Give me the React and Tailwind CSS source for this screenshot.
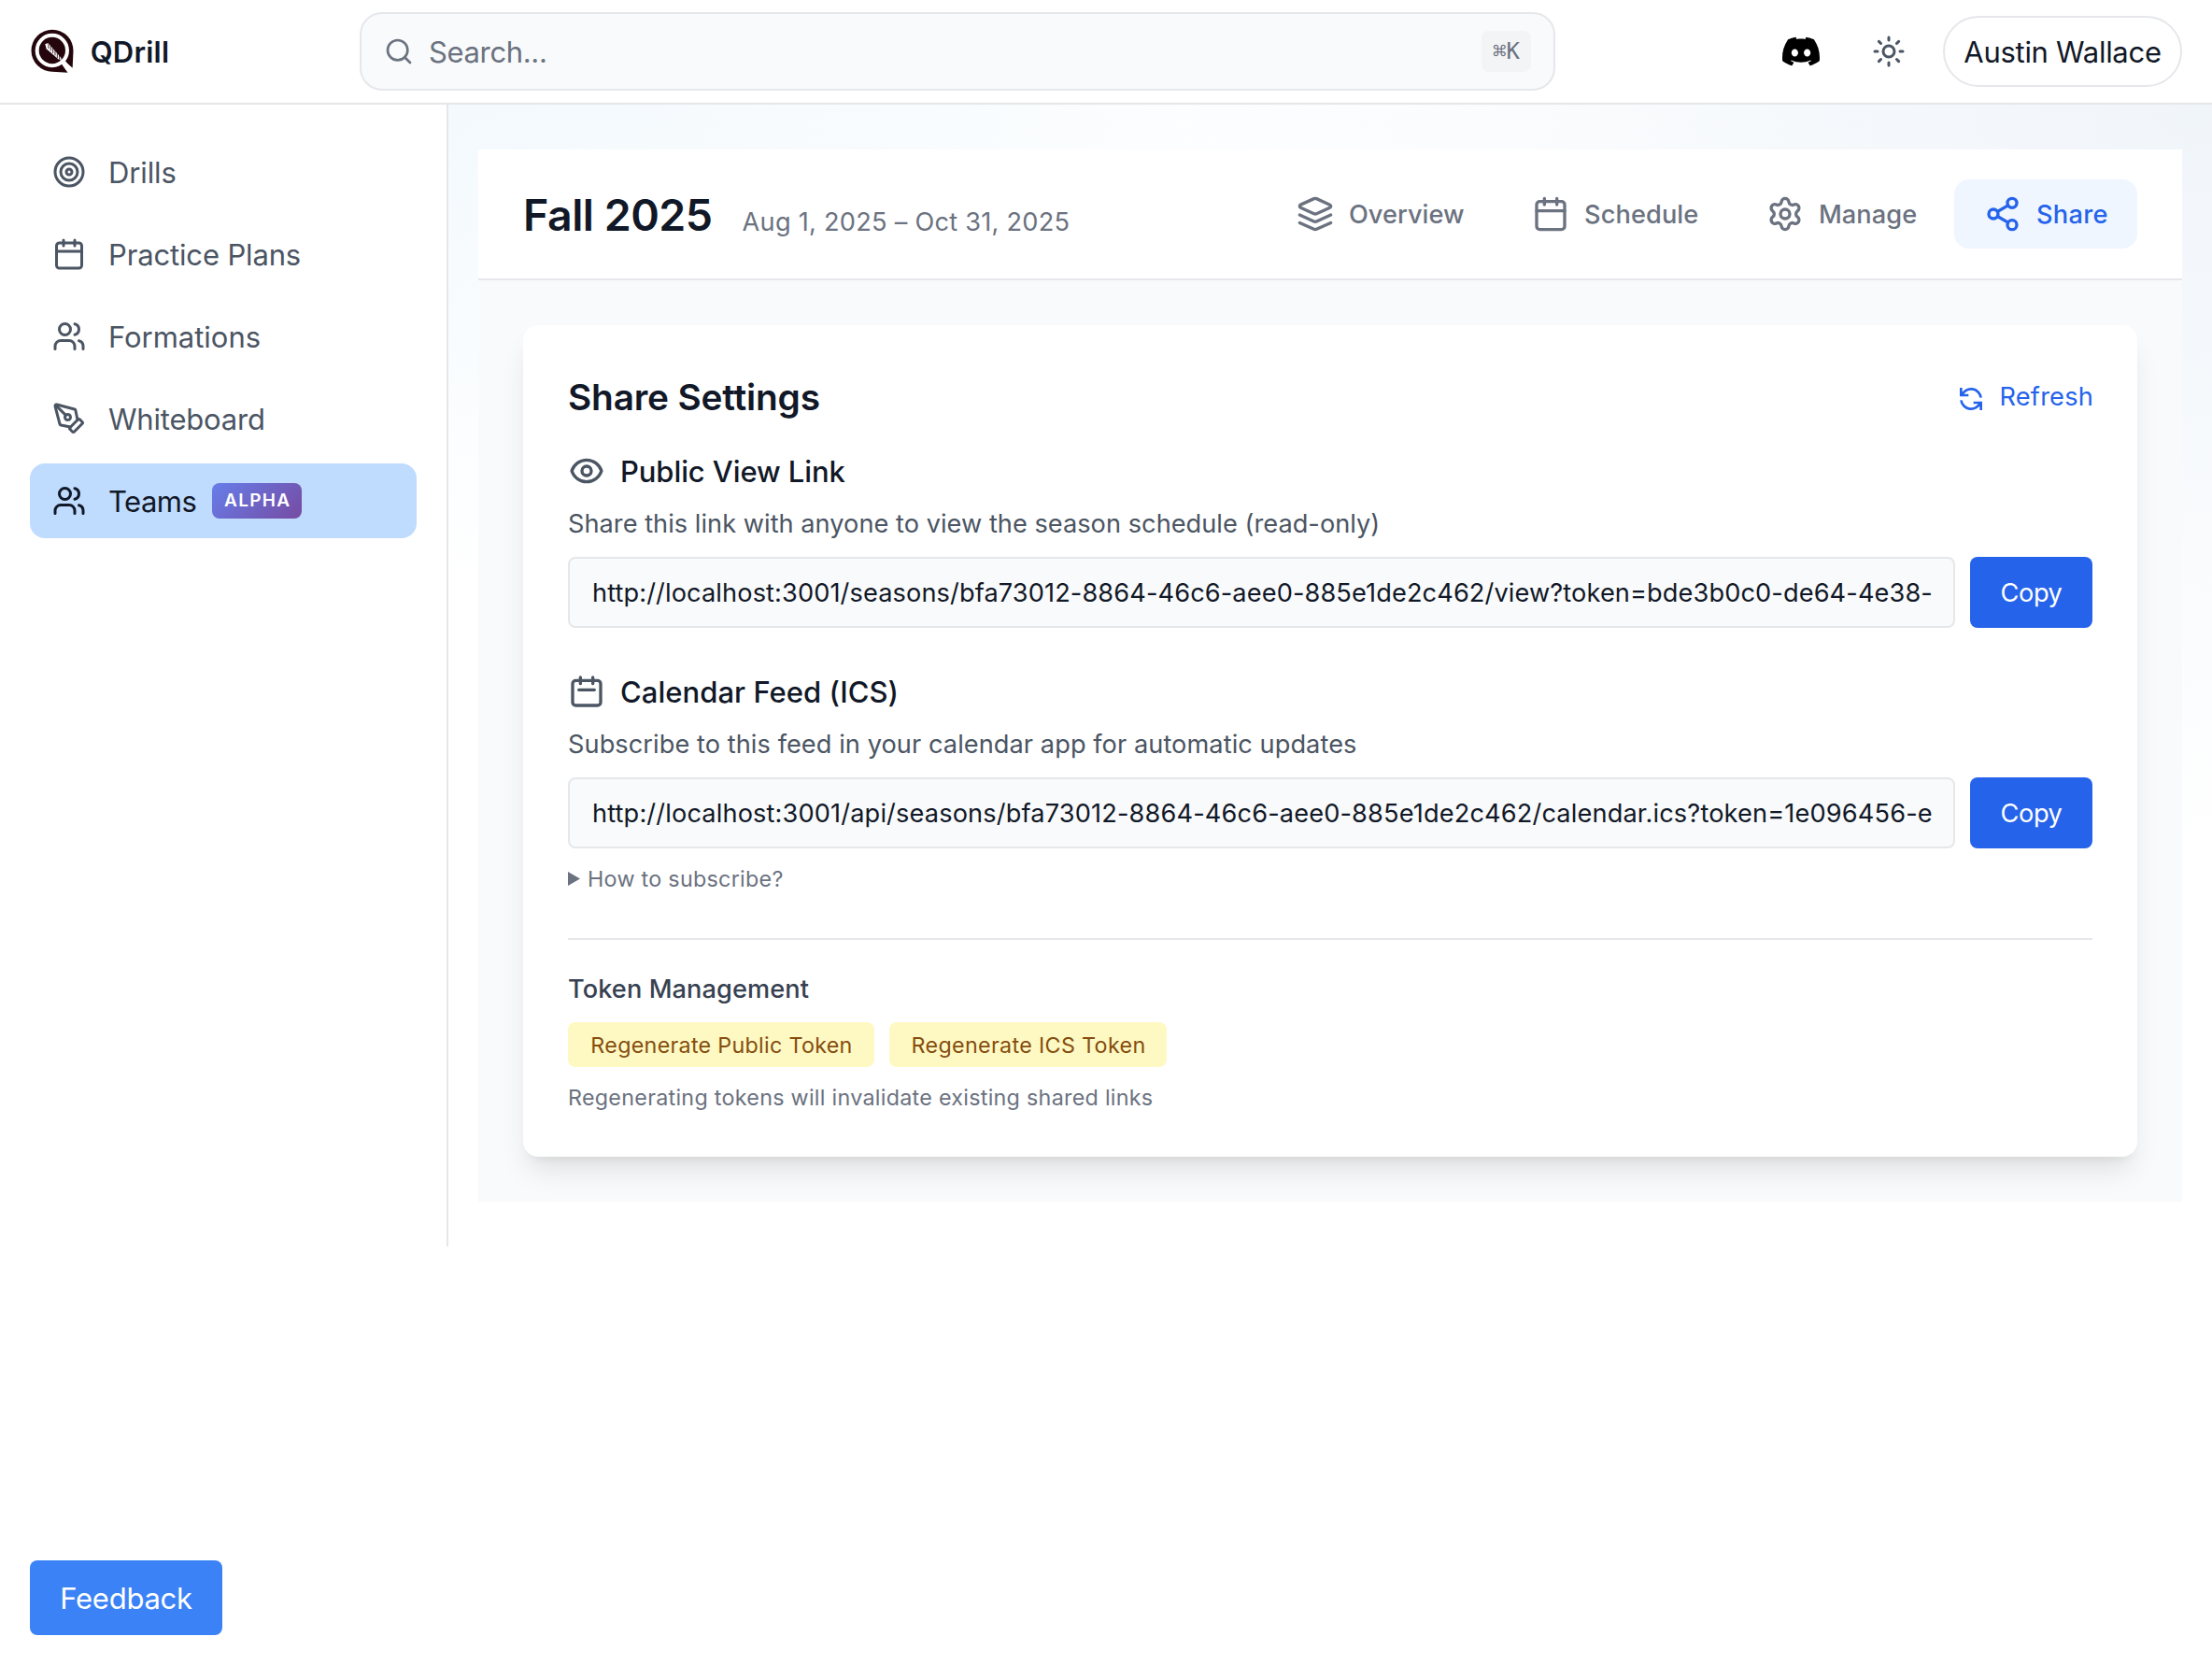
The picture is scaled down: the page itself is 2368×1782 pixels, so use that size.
import React from "react";
import { Search, Sun, Users, PenTool, Target, Settings, Share2 } from "lucide-react";
import { SiDiscord } from "react-icons/si";

const PUBLIC_URL =
  "http://localhost:3001/seasons/bfa73012-8864-46c6-aee0-885e1de2c462/view?token=bde3b0c0-de64-4e38-";
const ICS_URL =
  "http://localhost:3001/api/seasons/bfa73012-8864-46c6-aee0-885e1de2c462/calendar.ics?token=1e096456-e";

function Stroke({ className, width = 2, children }) {
  return (
    <svg
      className={className}
      viewBox="0 0 24 24"
      fill="none"
      stroke="currentColor"
      strokeWidth={width}
      strokeLinecap="round"
      strokeLinejoin="round"
    >
      {children}
    </svg>
  );
}

const CalendarIcon = ({ className }) => (
  <Stroke className={className}>
    <rect x="3" y="4" width="18" height="18" rx="2" />
    <path d="M16 2v4M8 2v4M3 10h18" />
  </Stroke>
);

const LayersIcon = ({ className }) => (
  <Stroke className={className}>
    <path d="m12.83 2.18a2 2 0 0 0-1.66 0L2.6 6.08a1 1 0 0 0 0 1.83l8.58 3.91a2 2 0 0 0 1.66 0l8.58-3.9a1 1 0 0 0 0-1.83Z" />
    <path d="m22 17.65-9.17 4.16a2 2 0 0 1-1.66 0L2 17.65" />
    <path d="m22 12.65-9.17 4.16a2 2 0 0 1-1.66 0L2 12.65" />
  </Stroke>
);

const EyeIcon = ({ className }) => (
  <Stroke className={className}>
    <path d="M15 12a3 3 0 11-6 0 3 3 0 016 0z" />
    <path d="M2.458 12C3.732 7.943 7.523 5 12 5c4.478 0 8.268 2.943 9.542 7-1.274 4.057-5.064 7-9.542 7-4.477 0-8.268-2.943-9.542-7z" />
  </Stroke>
);

const FeedIcon = ({ className }) => (
  <Stroke className={className}>
    <path d="M8 7V3m8 4V3m-9 8h10M5 21h14a2 2 0 002-2V7a2 2 0 00-2-2H5a2 2 0 00-2 2v12a2 2 0 002 2z" />
  </Stroke>
);

const RefreshIcon = ({ className }) => (
  <svg className={className} viewBox="0 0 24 24" fill="none" stroke="currentColor" strokeWidth="2">
    <path
      strokeLinecap="butt"
      d="M4 3v6h.582m15.356 2A8.001 8.001 0 004.582 9m0 0H10m10 12v-6h-.581m0 0a8.003 8.003 0 01-15.357-2m15.357 2H14"
    />
  </svg>
);

const Logo = () => (
  <svg className="ml-px h-[47.33px] w-[46.67px]" viewBox="40 34 140 142">
    <path
      fill="#24060c"
      d="M109 36A67.5 67.5 0 0 0 109 171L159 174Q152 164 146 154L155 144Q164 154 174 159L176.500 104A67.5 67.5 0 0 0 109 36Z"
    />
    <circle cx="108.500" cy="103" r="48.500" fill="none" stroke="#fff" strokeWidth="12" />
    <path d="M133 142L146 131Q158 148 174 159L176 174L159 174Q148 160 140 148Z" fill="#fff" />
    <path d="M86 82L96 80L137 126L139 136L128 131L90 98Z" fill="#fff" />
    <path
      d="M97 82V97M104 86V104M111 94V112M118 102V119M125 110V127M132 118V133"
      stroke="#24060c"
      strokeWidth="2.500"
    />
  </svg>
);

const NAV = [
  { label: "Drills", icon: <Target className="size-9" />, t: "tracking-[-0.13px]" },
  { label: "Practice Plans", icon: <CalendarIcon className="size-9" />, t: "tracking-[-0.15px]" },
  { label: "Formations", icon: <Users className="size-9" />, t: "tracking-[-0.03px]" },
  { label: "Whiteboard", icon: <PenTool className="size-9" />, t: "tracking-[-0.2px]" },
  { label: "Teams", icon: <Users className="size-9" />, t: "tracking-[-0.53px]", active: true },
];

const TABS = [
  { label: "Overview", icon: <LayersIcon className="size-10" />, w: "w-[244px]", t: "tracking-[0.02px]" },
  { label: "Schedule", icon: <CalendarIcon className="size-10" />, w: "w-[243px]", t: "tracking-[0.1px]" },
  { label: "Manage", icon: <Settings className="size-10" />, w: "w-[225px]", t: "tracking-[0.06px]" },
  { label: "Share", icon: <Share2 className="size-10" />, w: "w-[196px]", t: "tracking-[0.3px]", active: true },
];

function Header() {
  return (
    <header className="flex h-28 items-center border-b-2 border-gray-200 bg-white px-8">
      <div className="flex w-[353px] shrink-0 items-center gap-[17px]">
        <Logo />
        <span className="pt-[2px] text-[31px] leading-10 font-semibold tracking-[0.22px] text-[#111827]">QDrill</span>
      </div>
      <div className="flex h-[84px] w-[1280px] shrink-0 items-center rounded-3xl border-2 border-[#e5e7eb] bg-[#f9fafb] px-6 text-[#6b7280]">
        <Search className="size-8" />
        <span className="ml-4 flex-1 pt-[2px] text-[31px] tracking-[-0.35px]">Search...</span>
        <kbd className="flex h-11 w-[53px] items-center justify-center rounded-lg bg-[#f3f4f6] font-['DejaVu_Sans_Mono'] text-[24px]">
          ⌘K
        </kbd>
      </div>
      <div className="flex flex-1 items-center justify-end">
        <SiDiscord className="size-10 text-black" />
        <Sun className="ml-14 size-9 text-[#4b5563]" />
        <button className="ml-10 flex h-[76px] w-64 items-center justify-center rounded-full border-2 border-[#e5e7eb] pt-[2px] text-[31px] tracking-[-0.28px] whitespace-nowrap text-[#111827]">
          Austin Wallace
        </button>
      </div>
    </header>
  );
}

function Sidebar() {
  return (
    <aside className="flex h-[1222px] w-[480px] shrink-0 flex-col gap-2 border-r-2 border-[#e5e7eb] bg-white p-8">
      {NAV.map((n) => (
        <a
          key={n.label}
          className={
            "flex h-20 items-center rounded-2xl px-6 text-[31px] " +
            (n.active ? "bg-[#bfdbfe] text-[#111827]" : "text-[#4b5563]")
          }
        >
          {n.icon}
          <span className={"ml-6 pt-[2px] " + n.t}>{n.label}</span>
          {n.active && (
            <span className="ml-[17px] flex h-[38px] w-24 items-center justify-center rounded-lg bg-[linear-gradient(135deg,#667eea_0%,#764ba2_100%)] pt-px pl-px text-[19px] font-semibold tracking-[1.35px] text-white">
              ALPHA
            </span>
          )}
        </a>
      ))}
    </aside>
  );
}

function LinkRow({ url, tracking }) {
  return (
    <div className="mt-4 flex gap-4">
      <div className="flex h-[76px] flex-1 items-center overflow-hidden rounded-lg border-2 border-[#e5e7eb] bg-[#f9fafb] pt-[2px] pl-6 text-[27.2px] text-[#111827]">
        <span className={"whitespace-nowrap " + tracking}>{url}</span>
      </div>
      <button className="h-[76px] w-[131px] rounded-lg bg-[#2563eb] pt-[2px] text-[27.2px] tracking-[-0.4px] text-white">
        Copy
      </button>
    </div>
  );
}

function ShareCard() {
  return (
    <section className="rounded-2xl bg-white p-12 shadow-[0_20px_30px_-6px_rgba(0,0,0,0.1),0_8px_12px_-8px_rgba(0,0,0,0.1)]">
      <div className="flex h-14 items-center justify-between">
        <h2 className="pt-[2px] text-[38.8px] leading-[56px] font-semibold tracking-[-0.18px] text-[#111827]">
          Share Settings
        </h2>
        <button className="-mr-px flex items-center gap-[15px] text-[27.2px] leading-10 tracking-[0.2px] text-[#2563eb]">
          <RefreshIcon className="mt-[6px] size-8" />
          <span className="pt-[2px]">Refresh</span>
        </button>
      </div>

      <h3 className="mt-7 flex h-12 items-center gap-4 text-[31px] font-medium tracking-[-0.09px] text-[#111827]">
        <EyeIcon className="size-10 text-[#4b5563]" />
        <span className="pt-[2px]">Public View Link</span>
      </h3>
      <p className="mt-3 h-10 pt-px text-[27.2px] leading-10 tracking-[0.022px] text-[#4b5563]">
        Share this link with anyone to view the season schedule (read-only)
      </p>
      <LinkRow url={PUBLIC_URL} tracking="tracking-[0.104px]" />

      <h3 className="mt-11 flex h-12 items-center gap-4 text-[31px] font-medium tracking-[0.04px] text-[#111827]">
        <FeedIcon className="size-10 text-[#4b5563]" />
        <span className="pt-[2px]">Calendar Feed (ICS)</span>
      </h3>
      <p className="mt-3 h-10 pt-px text-[27.2px] leading-10 tracking-[0.059px] text-[#4b5563]">
        Subscribe to this feed in your calendar app for automatic updates
      </p>
      <LinkRow url={ICS_URL} tracking="tracking-[0.136px]" />

      <div className="mt-4 flex h-8 items-center gap-[8px] text-[23.3px] leading-8 tracking-[0.28px] text-[#6b7280]">
        <svg className="h-[15px] w-[13px]" viewBox="0 0 13 15" fill="currentColor">
          <path d="M0 0L13 7.5L0 15Z" />
        </svg>
        <span className="pt-[2px]">How to subscribe?</span>
      </div>

      <div className="mt-12 border-t-2 border-[#e5e7eb] pt-8">
        <h4 className="h-10 pt-px text-[27.2px] leading-10 font-medium tracking-[0.08px] text-[#374151]">
          Token Management
        </h4>
        <div className="mt-4 flex gap-4 text-[23.3px] text-[#854d0e]">
          <button className="h-12 w-[328px] rounded-lg bg-[#fef9c3] pt-[2px] pl-px tracking-[0.29px]">
            Regenerate Public Token
          </button>
          <button className="h-12 w-[297px] rounded-lg bg-[#fef9c3] pt-[2px] pl-px tracking-[0.33px]">
            Regenerate ICS Token
          </button>
        </div>
        <p className="mt-4 h-8 pt-px text-[23.3px] leading-8 tracking-[0.28px] text-[#6b7280]">
          Regenerating tokens will invalidate existing shared links
        </p>
      </div>
    </section>
  );
}

export default function App() {
  return (
    <div className="min-h-screen bg-white font-['Inter',sans-serif]">
      <Header />
      <div className="flex">
        <Sidebar />
        <main className="flex-1 bg-[radial-gradient(1100px_520px_at_0_0,#f3f9fd,transparent),radial-gradient(1100px_800px_at_100%_0,#f0f5fa,transparent)] px-8 pt-12 pb-12">
          <div className="bg-[#f9fafb]">
            <div className="flex h-[140px] items-center justify-between border-b-2 border-[#e5e7eb] bg-white px-12">
              <div className="flex items-baseline pt-[2px]">
                <h1 className="text-[46.5px] leading-[64px] font-semibold tracking-[-0.5px] text-[#111827]">
                  Fall 2025
                </h1>
                <span className="ml-8 text-[27.2px] leading-10 tracking-[0.243px] text-[#6b7280]">
                  Aug 1, 2025 – Oct 31, 2025
                </span>
              </div>
              <nav className="flex gap-2">
                {TABS.map((t) => (
                  <a
                    key={t.label}
                    className={
                      "flex h-[74px] items-center rounded-2xl pl-8 text-[27.2px] font-medium " +
                      t.w +
                      (t.active ? " bg-[#eff6ff] text-[#2563eb]" : " text-[#6b7280]")
                    }
                  >
                    {t.icon}
                    <span className={"ml-4 pt-[2px] " + t.t}>{t.label}</span>
                  </a>
                ))}
              </nav>
            </div>
            <div className="p-12">
              <ShareCard />
            </div>
          </div>
        </main>
      </div>
      <button className="fixed bottom-8 left-8 h-20 w-[206px] rounded-lg bg-[#3b82f6] pt-[2px] text-[31px] tracking-[-0.25px] text-white">
        Feedback
      </button>
    </div>
  );
}
